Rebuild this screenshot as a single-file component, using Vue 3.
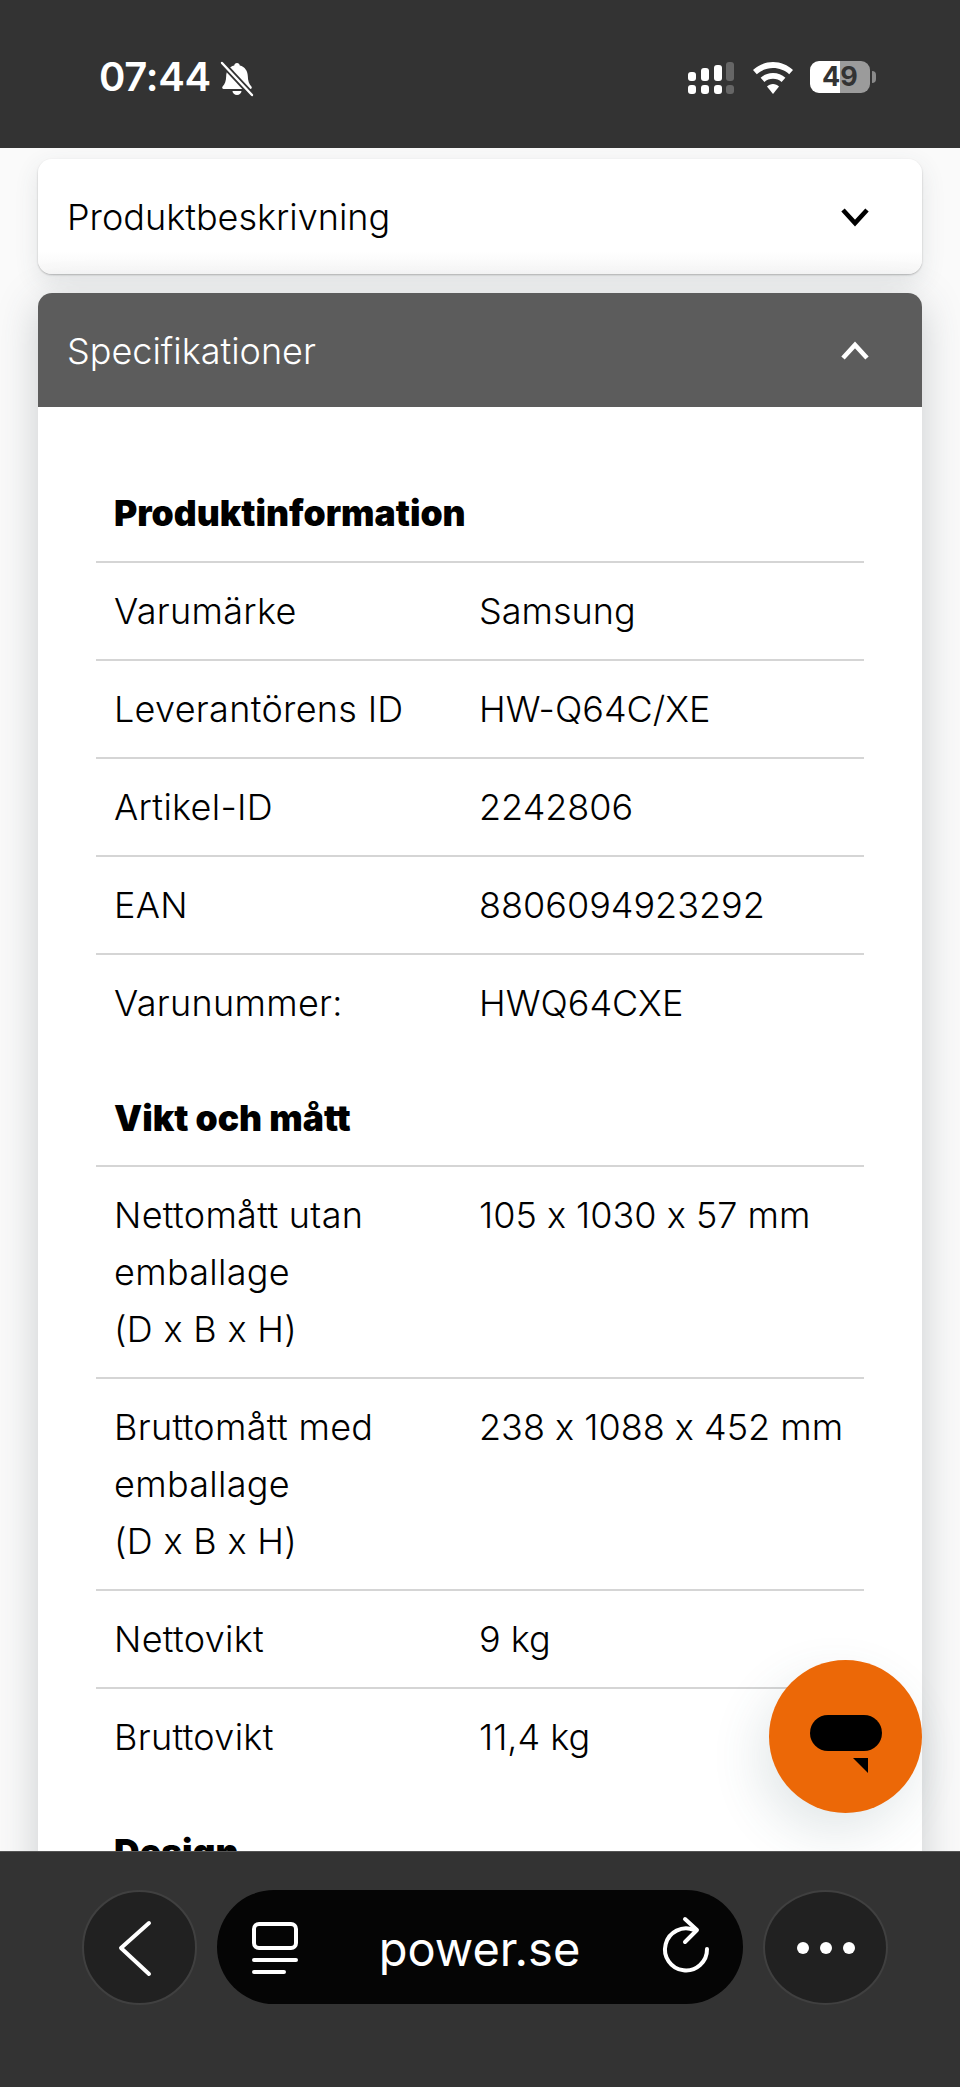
<script setup>
const sections = [
  {
    title: 'Produktinformation',
    rows: [
      ['Varumärke', 'Samsung'],
      ['Leverantörens ID', 'HW-Q64C/XE'],
      ['Artikel-ID', '2242806'],
      ['EAN', '8806094923292'],
      ['Varunummer:', 'HWQ64CXE'],
    ],
  },
  {
    title: 'Vikt och mått',
    rows: [
      [['Nettomått utan', 'emballage', '(D x B x H)'], '105 x 1030 x 57 mm'],
      [['Bruttomått med', 'emballage', '(D x B x H)'], '238 x 1088 x 452 mm'],
      ['Nettovikt', '9 kg'],
      ['Bruttovikt', '11,4 kg'],
    ],
  },
  { title: 'Design', rows: [] },
]
</script>

<template>
  <div class="phone">
    <header class="status">
      <div class="time-wrap">
        <span class="time">07:44</span>
        <svg class="bell" width="36" height="36" viewBox="0 0 36 36">
          <path d="M18 2c1.600 0 2.600 1 2.800 2.400C26 5.600 28.600 10 28.800 15c.2 5 1.200 8 3.600 10.600.9 1 .3 2.400-1 2.400H4.600c-1.300 0-1.900-1.400-1-2.400C6 23 7 20 7.200 15 7.400 10 10 5.600 15.200 4.400 15.400 3 16.400 2 18 2z" fill="#fff"/>
          <path d="M13.500 30h9a4.500 4 0 0 1-9 0z" fill="#fff"/>
          <path d="M3 2l30 32" stroke="#333" stroke-width="6"/>
          <path d="M3 2l30 32" stroke="#fff" stroke-width="2.400" stroke-linecap="round"/>
        </svg>
      </div>
      <div class="indicators">
        <svg class="signal" width="46" height="33" viewBox="0 0 46 33">
          <rect x="0" y="10" width="8" height="9" rx="3" fill="#fff"/>
          <rect x="13" y="6" width="8" height="13" rx="3" fill="#fff"/>
          <rect x="26" y="3" width="8" height="16" rx="3" fill="#fff"/>
          <rect x="38" y="0" width="8" height="19" rx="3" fill="#666"/>
          <rect x="0" y="23" width="8" height="9" rx="3" fill="#fff"/>
          <rect x="13" y="23" width="8" height="9" rx="3" fill="#fff"/>
          <rect x="26" y="23" width="8" height="9" rx="3" fill="#fff"/>
          <rect x="38" y="23" width="8" height="9" rx="3" fill="#666"/>
        </svg>
        <svg class="wifi" width="40" height="32" viewBox="0 0 40 32">
          <path d="M20 0c7.800 0 14.700 3 20 8l-3.800 4.200C31.900 8.300 26.200 6 20 6S8.100 8.300 3.800 12.200L0 8C5.300 3 12.200 0 20 0z" fill="#fff"/>
          <path d="M20 11c4.800 0 9.100 1.800 12.400 4.800l-3.800 4.200C26.300 18 23.300 16.800 20 16.800S13.700 18 11.400 20l-3.800-4.200C10.900 12.800 15.200 11 20 11z" fill="#fff"/>
          <path d="M20 22c2.300 0 4.500.9 6 2.400L20 32l-6-7.600c1.500-1.500 3.700-2.400 6-2.400z" fill="#fff"/>
        </svg>
        <div class="battery">
          <div class="cell"><span>49</span></div>
          <i class="nub"></i>
        </div>
      </div>
    </header>

    <main class="content">
      <section class="card closed">
        <span>Produktbeskrivning</span>
        <svg width="30" height="20" viewBox="0 0 30 20"><path d="M3 3l12 13L27 3" fill="none" stroke="#000" stroke-width="4.600"/></svg>
      </section>

      <section class="card open">
        <div class="open-head">
          <span>Specifikationer</span>
          <svg width="30" height="20" viewBox="0 0 30 20"><path d="M3 17L15 4l12 13" fill="none" stroke="#fff" stroke-width="4.600"/></svg>
        </div>
        <div class="spec">
          <div v-for="s in sections" :key="s.title" class="group">
            <h3>{{ s.title }}</h3>
            <div v-for="(r, i) in s.rows" :key="i" class="row">
              <div class="label">
                <template v-if="Array.isArray(r[0])">
                  <div v-for="l in r[0]" :key="l">{{ l }}</div>
                </template>
                <template v-else>{{ r[0] }}</template>
              </div>
              <div class="value">{{ r[1] }}</div>
            </div>
          </div>
        </div>
      </section>

      <button class="fab" aria-label="Chatt">
        <svg width="72" height="58" viewBox="0 0 72 58">
          <rect x="0" y="0" width="72" height="36" rx="18" fill="#000"/>
          <path d="M43 43h15v15z" fill="#000"/>
        </svg>
      </button>
    </main>

    <footer class="browser">
      <button class="round back">
        <svg width="36" height="58" viewBox="0 0 36 58"><path d="M31 4L3 29l28 26" fill="none" stroke="#fff" stroke-width="4" stroke-linecap="round" stroke-linejoin="round"/></svg>
      </button>
      <div class="url">
        <svg class="tabs" width="48" height="58" viewBox="0 0 48 58">
          <rect x="3" y="2" width="42" height="24" rx="5" fill="none" stroke="#fff" stroke-width="4"/>
          <path d="M3 38h42M3 50h30" stroke="#fff" stroke-width="4" stroke-linecap="round"/>
        </svg>
        <span>power.se</span>
        <svg class="reload" width="52" height="60" viewBox="0 0 52 60">
          <path d="M34 15A21 21 0 1 0 47 34" fill="none" stroke="#fff" stroke-width="4" stroke-linecap="round"/>
          <path d="M25 4l12 11-12 12" fill="none" stroke="#fff" stroke-width="4" stroke-linecap="round" stroke-linejoin="round"/>
        </svg>
      </div>
      <button class="round more">
        <i></i><i></i><i></i>
      </button>
    </footer>
  </div>
</template>

<style scoped>
.phone {
  width: 960px;
  height: 2087px;
  display: flex;
  flex-direction: column;
  overflow: hidden;
  background: #fafafa;
  font-family: "Inter", "Liberation Sans", sans-serif;
  font-feature-settings: "calt" 0;
  color: #000;
}
.status {
  height: 148px;
  flex: none;
  background: #333;
  display: flex;
  justify-content: space-between;
  padding: 60px 84px 0 99px;
  box-sizing: border-box;
  color: #fff;
}
.time-wrap { display: flex; align-items: flex-start; gap: 8px; }
.time { font-size: 40px; font-weight: 600; line-height: 36px; letter-spacing: -.3px; margin-top: -1px; }
.bell { margin-top: 1px; }
.indicators { display: flex; align-items: flex-start; }
.signal { margin: 2px 19px 0 0; }
.wifi { margin: 2px 17px 0 0; }
.battery { display: flex; align-items: center; gap: 2px; margin-top: 1px; }
.cell {
  width: 60px;
  height: 32px;
  border-radius: 9px;
  background: linear-gradient(90deg, #fff 0 50%, #9b9b9b 50% 100%);
  color: #333;
  font-size: 27px;
  font-weight: 700;
  line-height: 32px;
  text-align: center;
}
.nub { width: 4px; height: 12px; border-radius: 0 4px 4px 0; background: #8a8a8a; }

.content {
  flex: 1;
  min-height: 0;
  position: relative;
  overflow: hidden;
  padding: 11px 38px 0;
  box-sizing: border-box;
}
.card {
  background: #fff;
  border-radius: 14px;
  font-weight: 300;
  font-size: 36px;
}
.closed {
  height: 115px;
  margin-bottom: 19px;
  padding: 0 52px 0 29px;
  display: flex;
  align-items: center;
  justify-content: space-between;
  box-sizing: border-box;
  background: linear-gradient(#fff 80%, #f6f6f6);
  box-shadow: 0 1px 2px rgba(0,0,0,.25), 0 8px 24px rgba(60,70,80,.12);
}
.open { box-shadow: 0 10px 40px rgba(60,70,80,.25); }
.open-head {
  height: 114px;
  padding: 2px 52px 0 29px;
  display: flex;
  align-items: center;
  justify-content: space-between;
  box-sizing: border-box;
  background: #5c5c5c;
  color: #fff;
  border-radius: 14px 14px 0 0;
}
.spec { padding: 40px 58px 0; }
.group h3 {
  margin: 0;
  height: 116px;
  box-sizing: border-box;
  padding: 43px 0 0 18px;
  border-bottom: 2px solid #d5d5d5;
  font-size: 35.500px;
  font-weight: 900;
  line-height: 47px;
}
.group + .group h3 { padding-top: 44px; height: 116px; }
.row {
  display: grid;
  grid-template-columns: 365px 1fr;
  padding: 20px 0 19px 18px;
  line-height: 57px;
  border-bottom: 2px solid #d5d5d5;
}
.label { letter-spacing: .3px; }
.row:last-child { border-bottom: 0; }

.fab {
  position: absolute;
  left: 769px;
  top: 1512px;
  width: 153px;
  height: 153px;
  border: 0;
  padding: 0;
  border-radius: 50%;
  background: #ec6807;
  display: flex;
  align-items: center;
  justify-content: center;
  box-shadow: -10px 20px 50px rgba(60,90,100,.14);
}
.fab svg { margin-top: 15px; }

.browser {
  height: 236px;
  flex: none;
  background: #333;
  border-top: 1px solid #555;
  box-sizing: border-box;
  padding: 38px 72px 0 82px;
  display: flex;
  align-items: flex-start;
  gap: 20px;
}
.round {
  height: 115px;
  border-radius: 50%;
  background: #212121;
  border: 2px solid #404040;
  padding: 0;
  box-sizing: border-box;
  display: flex;
  align-items: center;
  justify-content: center;
  flex: none;
}
.back { width: 115px; }
.back svg { margin-right: 8px; }
.more { width: 125px; gap: 11px; }
.more i { width: 12px; height: 12px; border-radius: 50%; background: #fff; }
.url {
  flex: 1;
  height: 114px;
  border-radius: 57px;
  background: #050505;
  display: flex;
  align-items: center;
  justify-content: space-between;
  padding: 0 31px 0 34px;
  box-sizing: border-box;
  color: #fff;
  font-size: 47px;
  font-weight: 400;
}
.url span { margin-top: 2px; }
.url .tabs { margin-top: 7px; }
.url .reload { margin-top: -5px; }
</style>

<style>
html, body { margin: 0; padding: 0; }
</style>
